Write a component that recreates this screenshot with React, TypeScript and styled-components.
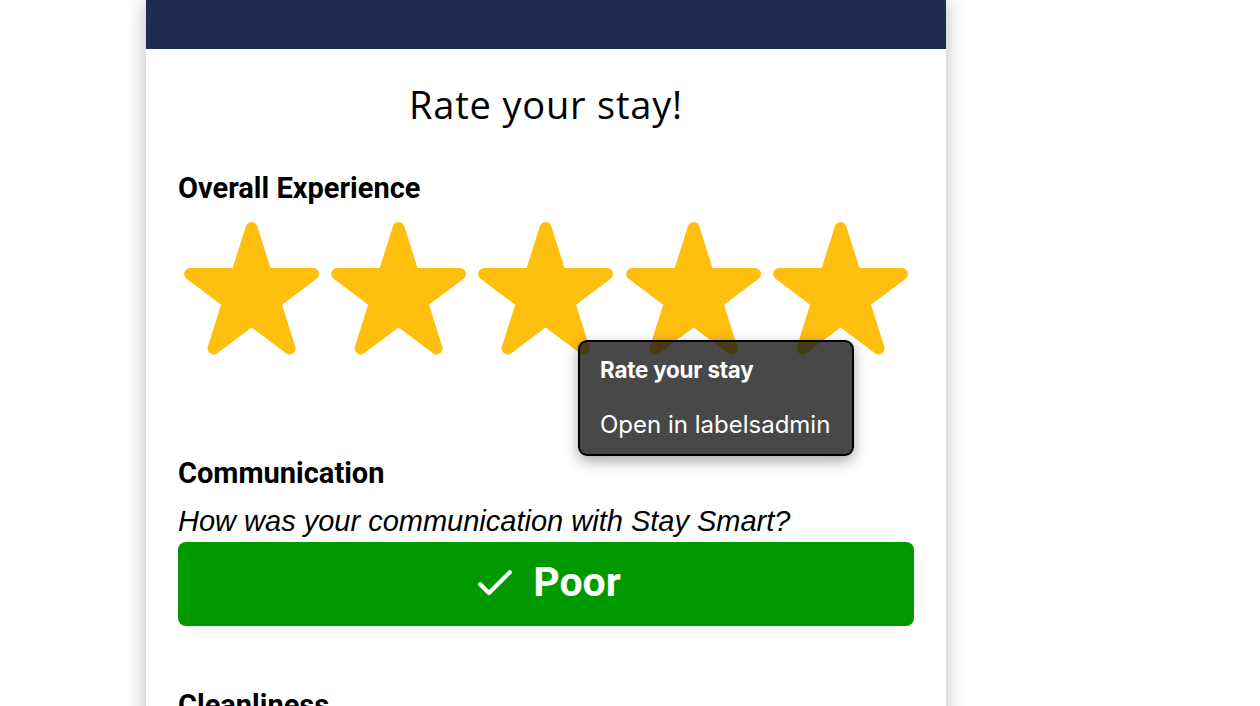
import React from "react";
import styled, { createGlobalStyle } from "styled-components";

const Global = createGlobalStyle`
  html, body { margin: 0; padding: 0; background: #ffffff; }
  body { overflow: hidden; }
  #root { height: 706px; }
`;

const Page = styled.div`
  height: 706px;
  overflow: hidden;
  background: #ffffff;
`;

const Card = styled.main`
  position: relative;
  width: 800px;
  min-height: 760px;
  margin-left: 146px;
  background: #ffffff;
  box-shadow: 0 0 18px rgba(0, 0, 0, 0.28);
`;

const TopBar = styled.header`
  height: 49px;
  background: #1e2c4f;
`;

const Content = styled.div`
  display: flex;
  flex-direction: column;
  padding: 0 32px;
`;

const Title = styled.h1`
  margin: 33px 0 0;
  text-align: center;
  font-family: "Open Sans", "Lato", sans-serif;
  font-weight: 400;
  font-size: 38px;
  line-height: 44px;
  letter-spacing: 0.8px;
  color: #000;
`;

const SectionTitle = styled.h2<{ $gap: number }>`
  margin: ${(p) => p.$gap}px 0 0;
  font-family: "Roboto", "Liberation Sans", sans-serif;
  font-weight: 700;
  font-size: 29px;
  line-height: 32px;
  color: #000;
`;

const Question = styled.p`
  margin: 16px 0 0;
  font-family: "Liberation Sans", Arial, sans-serif;
  font-style: italic;
  font-size: 29px;
  line-height: 32px;
  color: #000;
`;

const StarRow = styled.div`
  display: grid;
  grid-template-columns: repeat(5, 1fr);
  margin-top: 11px;
  height: 147px;
`;

const StarCell = styled.button`
  display: flex;
  align-items: center;
  justify-content: center;
  padding: 0;
  border: 0;
  background: transparent;
  cursor: pointer;
  svg { display: block; }
`;

const ChoiceButton = styled.button`
  display: flex;
  align-items: center;
  justify-content: center;
  gap: 14px;
  margin-top: 5px;
  height: 84px;
  border: 0;
  border-radius: 8px;
  background: #009900;
  color: #ffffff;
  font-family: "Roboto", "Liberation Sans", sans-serif;
  font-weight: 700;
  font-size: 41px;
  padding: 0 0 4px;
  cursor: pointer;
  svg { display: block; margin-top: 2px; }
`;

const Tooltip = styled.div`
  position: absolute;
  left: 432px;
  top: 340px;
  width: 276px;
  height: 116px;
  box-sizing: border-box;
  padding: 14px 20px 0 20px;
  border: 2px solid #000;
  border-radius: 9px;
  background: rgba(20, 20, 20, 0.78);
  box-shadow: 0 5px 14px rgba(0, 0, 0, 0.35);
  font-family: "Inter", "Noto Sans", sans-serif;
  color: #ffffff;
`;

const TipTitle = styled.div`
  font-weight: 700;
  font-size: 22.4px;
  line-height: 28px;
  letter-spacing: -0.2px;
`;

const TipItem = styled.div`
  margin-top: 26px;
  font-weight: 400;
  font-size: 24px;
  line-height: 30px;
`;

const STAR_POINTS =
  "73.6,13 88.1,59 135,59 97.1,87.5 111.6,133.5 73.6,105 35.6,133.5 50.1,87.5 12.2,59 59.1,59";

const Star = () => (
  <svg width="147" height="147" viewBox="0 0 147 147" aria-hidden="true">
    <polygon
      points={STAR_POINTS}
      fill="#ffbf0f"
      stroke="#ffbf0f"
      strokeWidth="12"
      strokeLinejoin="round"
    />
  </svg>
);

const Check = () => (
  <svg width="48" height="48" viewBox="0 0 24 24" aria-hidden="true">
    <polyline
      points="4.6,12.6 9,17 19.4,6.6"
      fill="none"
      stroke="#ffffff"
      strokeWidth="2.1"
      strokeLinecap="round"
      strokeLinejoin="round"
    />
  </svg>
);

export default function App() {
  return (
    <Page>
      <Global />
      <Card>
        <TopBar />
        <Content>
          <Title>Rate your stay!</Title>
          <SectionTitle $gap={46}>Overall Experience</SectionTitle>
          <StarRow>
            {[1, 2, 3, 4, 5].map((n) => (
              <StarCell key={n} aria-label={`${n} stars`}>
                <Star />
              </StarCell>
            ))}
          </StarRow>
          <SectionTitle $gap={95}>Communication</SectionTitle>
          <Question>How was your communication with Stay Smart?</Question>
          <ChoiceButton>
            <Check />
            <span>Poor</span>
          </ChoiceButton>
          <SectionTitle $gap={63}>Cleanliness</SectionTitle>
        </Content>
        <Tooltip role="menu">
          <TipTitle>Rate your stay</TipTitle>
          <TipItem>Open in labelsadmin</TipItem>
        </Tooltip>
      </Card>
    </Page>
  );
}
